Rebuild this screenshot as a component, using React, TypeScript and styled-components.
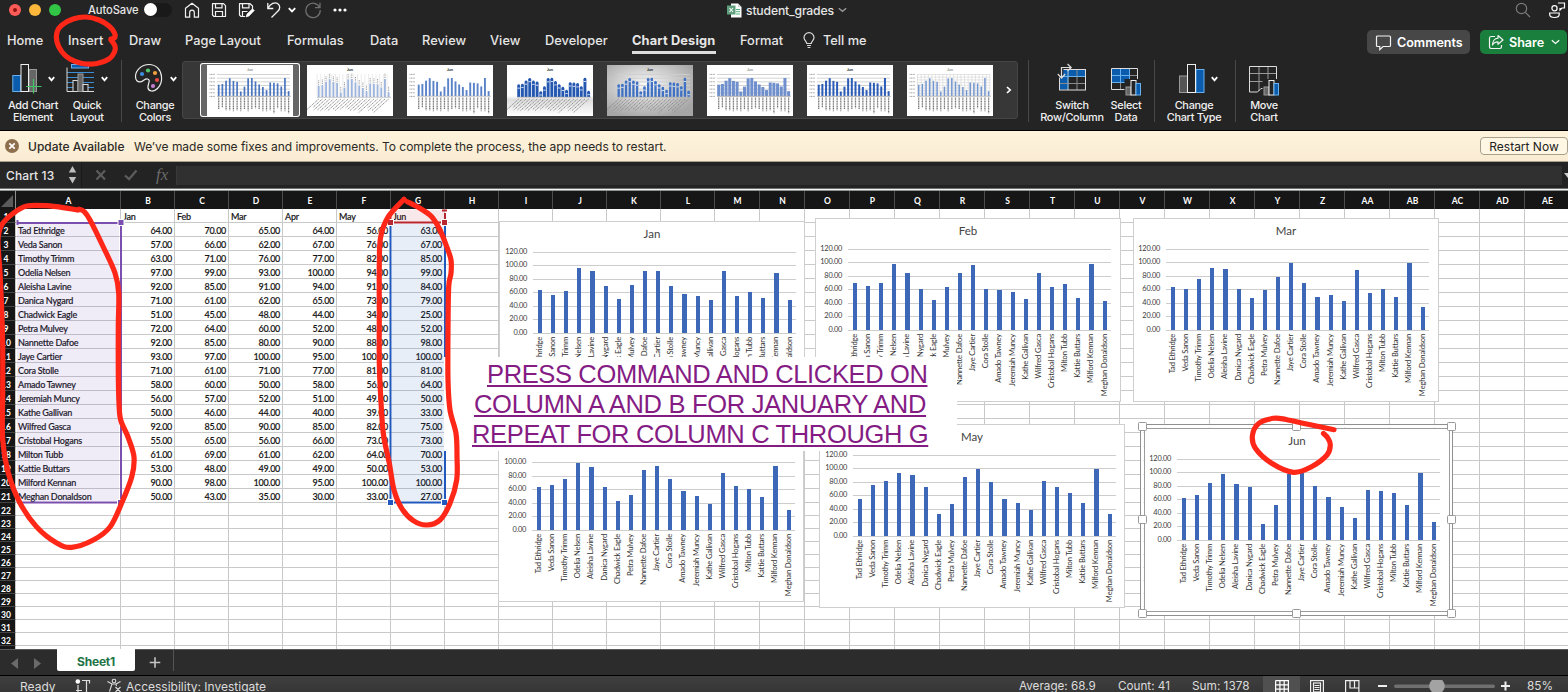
import React from "react";
import styled, { createGlobalStyle, css } from "styled-components";

const UI = `Inter, "Liberation Sans", sans-serif`;
const CELL = `Lato, "Liberation Sans", sans-serif`;

const Global = createGlobalStyle`
  * { box-sizing: border-box; }
  body { margin: 0; background: #242424; overflow: hidden; }
  svg { display: block; flex: none; }
`;

/* ---------- data ---------- */

const students: [string, number[]][] = [
  ["Tad Ethridge", [64, 70, 65, 64, 56, 63]],
  ["Veda Sanon", [57, 66, 62, 67, 76, 67]],
  ["Timothy Trimm", [63, 71, 76, 77, 82, 85]],
  ["Odelia Nelsen", [97, 99, 93, 100, 94, 99]],
  ["Aleisha Lavine", [92, 85, 91, 94, 91, 84]],
  ["Danica Nygard", [71, 61, 62, 65, 73, 79]],
  ["Chadwick Eagle", [51, 45, 48, 44, 34, 25]],
  ["Petra Mulvey", [72, 64, 60, 52, 48, 52]],
  ["Nannette Dafoe", [92, 85, 80, 90, 88, 98]],
  ["Jaye Cartier", [93, 97, 100, 95, 100, 100]],
  ["Cora Stolle", [71, 61, 71, 77, 81, 81]],
  ["Amado Tawney", [58, 60, 50, 58, 56, 64]],
  ["Jeremiah Muncy", [56, 57, 52, 51, 49, 50]],
  ["Kathe Gallivan", [50, 46, 44, 40, 39, 33]],
  ["Wilfred Gasca", [92, 85, 90, 85, 82, 75]],
  ["Cristobal Hogans", [55, 65, 56, 66, 73, 73]],
  ["Milton Tubb", [61, 69, 61, 62, 64, 70]],
  ["Kattie Buttars", [53, 48, 49, 49, 50, 53]],
  ["Milford Kennan", [90, 98, 100, 95, 100, 100]],
  ["Meghan Donaldson", [50, 43, 35, 30, 33, 27]],
];
const months = ["Jan", "Feb", "Mar", "Apr", "May", "Jun"];
const seriesOf = (m: number) => students.map((s) => s[1][m]);

const columns = Array.from({ length: 31 }, (_, i) => ({
  name: i < 26 ? String.fromCharCode(65 + i) : "A" + String.fromCharCode(65 + i - 26),
  width: i === 0 ? 105 : i < 12 ? 54 : 45,
}));
const rows = Array.from({ length: 33 }, (_, i) => i + 1);

/* ---------- window chrome ---------- */

const Window = styled.div`
  position: relative;
  width: 1568px;
  height: 692px;
  overflow: hidden;
  display: flex;
  flex-direction: column;
  background: #242424;
  color: #e6e6e6;
  font-family: ${UI};
`;

const TitleBar = styled.header`
  display: flex;
  align-items: center;
  height: 20px;
  padding-left: 9px;
`;
const Light = styled.span<{ $c: string; $dot?: boolean }>`
  display: flex;
  align-items: center;
  justify-content: center;
  width: 12px;
  height: 12px;
  margin-right: 8px;
  border-radius: 50%;
  background: ${(p) => p.$c};
  ${(p) => p.$dot && css`&::after { content: ""; width: 4px; height: 4px; border-radius: 50%; background: #8c1410; }`}
`;
const Label = styled.span<{ $w: number; $size?: number; $weight?: number; $ls?: number; $ml?: number }>`
  width: ${(p) => p.$w}px;
  margin-left: ${(p) => p.$ml ?? 0}px;
  flex: none;
  white-space: nowrap;
  font-size: ${(p) => p.$size ?? 12}px;
  font-weight: ${(p) => p.$weight ?? 500};
  letter-spacing: ${(p) => p.$ls ?? 0}px;
`;
const Toggle = styled.span`
  width: 28px;
  height: 14px;
  margin-left: 6px;
  border-radius: 7px;
  background: #191919;
  &::after { content: ""; display: block; width: 13px; height: 13px; border-radius: 50%; background: #fff; }
`;
const Slot = styled.span<{ $w: number; $ml?: number }>`
  display: flex;
  flex: none;
  justify-content: center;
  align-items: center;
  width: ${(p) => p.$w}px;
  margin-left: ${(p) => p.$ml ?? 0}px;
`;

const TabRow = styled.nav`
  display: flex;
  height: 40px;
  align-items: center;
  padding-left: 7px;
`;
const Tab = styled.span<{ $w: number; $gap: number; $active?: boolean }>`
  display: flex;
  flex: none;
  align-items: center;
  width: ${(p) => p.$w}px;
  height: 28px;
  margin-right: ${(p) => p.$gap}px;
  white-space: nowrap;
  font-size: 12.8px;
  font-weight: ${(p) => (p.$active ? 700 : 500)};
  letter-spacing: ${(p) => (p.$active ? 0.15 : 0.04)}px;
  border-bottom: 3px solid ${(p) => (p.$active ? "#dcdcdc" : "transparent")};
  border-top: 3px solid transparent;
`;
const PillButton = styled.button<{ $w: number; $bg: string; $ml: number }>`
  display: flex;
  flex: none;
  align-items: center;
  gap: 5px;
  width: ${(p) => p.$w}px;
  height: 24px;
  margin: 4px 0 0 ${(p) => p.$ml}px;
  padding: 0 0 0 8px;
  border: 0;
  border-radius: 5px;
  background: ${(p) => p.$bg};
  color: #fff;
  font: 600 12.6px ${UI};
  letter-spacing: -0.05px;
`;

const Ribbon = styled.section`
  display: flex;
  height: 71px;
  padding-left: 4px;
  border-bottom: 1px solid #000;
`;
const RibbonButton = styled.div<{ $w: number; $ml?: number }>`
  display: flex;
  flex: none;
  flex-direction: column;
  align-items: center;
  width: ${(p) => p.$w}px;
  margin-left: ${(p) => p.$ml ?? 0}px;
  padding-top: 3px;
  font-size: 10.9px;
  font-weight: 500;
  line-height: 12px;
  letter-spacing: -0.3px;
  text-align: center;
  white-space: pre;
  color: #f0f0f0;
`;
const IconRow = styled.div`
  display: flex;
  align-items: center;
  gap: 6px;
  height: 32px;
  margin-bottom: 4px;
`;
const Divider = styled.span<{ $ml: number }>`
  flex: none;
  width: 1px;
  height: 62px;
  margin-left: ${(p) => p.$ml}px;
  background: #484848;
`;
const Gallery = styled.div`
  display: flex;
  flex: none;
  align-items: center;
  width: 836px;
  height: 58px;
  margin: 1px 0 0 2px;
  padding-left: 17px;
  background: #373737;
  border: 1px solid #454545;
  border-radius: 3px;
`;
const ThumbFrame = styled.div<{ $on?: boolean }>`
  display: flex;
  flex: none;
  align-items: center;
  justify-content: center;
  width: 100px;
  height: 54px;
  border-radius: 3px;
  ${(p) => p.$on && css`background: #666; box-shadow: inset 0 0 0 1px #fff;`}
`;

const UpdateBar = styled.section`
  display: flex;
  align-items: center;
  height: 31px;
  padding-left: 5px;
  color: #2b2925;
  background: linear-gradient(#fff3dc, #f9ecd3);
  border-bottom: 1px solid #a89f8c;
`;
const RestartButton = styled.button`
  flex: none;
  width: 88px;
  height: 18px;
  padding: 0;
  border: 1px solid #a9a08c;
  border-radius: 4px;
  background: #fff6e3;
  color: #222;
  font: 400 12px ${UI};
  letter-spacing: 0;
`;

const FormulaBar = styled.section`
  display: flex;
  align-items: center;
  height: 26px;
  background: #232323;
`;
const NameBox = styled.div`
  display: flex;
  align-items: center;
  width: 82px;
  height: 26px;
  padding-left: 6px;
  background: #262626;
  border-right: 1px solid #191919;
`;
const FormulaInput = styled.div`
  width: 1386px;
  height: 19px;
  margin-left: 4px;
  background: #303030;
  border-left: 1px solid #3a3a3a;
`;
const Rule = styled.div`
  height: 3px;
  border-top: 1px solid #6f6f6f;
  border-bottom: 1px solid #8e9490;
  background: #f2f2f2;
`;

/* ---------- worksheet ---------- */

const Sheet = styled.main`
  position: relative;
  height: 458px;
  overflow: hidden;
  background: #fff;
  color: #151515;
  font-family: ${CELL};
`;
const HeaderRow = styled.div`
  display: flex;
  height: 18px;
  background: #161616;
`;
const ColumnHead = styled.span<{ $w: number }>`
  flex: none;
  width: ${(p) => p.$w}px;
  padding-left: 1px;
  border-right: 1px solid #4c4c4c;
  color: #fff;
  font-size: 8.5px;
  font-weight: 700;
  line-height: 20px;
  text-align: center;
`;
const Corner = styled.span`
  display: flex;
  justify-content: flex-end;
  align-items: flex-end;
  flex: none;
  width: 16px;
  padding: 0 2px 2px 0;
  border-right: 1px solid #8f8f8f;
`;
const Row = styled.div<{ $h: number }>`
  display: flex;
  height: ${(p) => p.$h}px;
`;
const RowHead = styled.span`
  flex: none;
  width: 16px;
  padding-right: 3px;
  background: #161616;
  border-right: 1px solid #c9c9c9;
  border-bottom: 1px solid #444;
  color: #fff;
  font-size: 8.5px;
  font-weight: 700;
  line-height: 16px;
  text-align: center;
`;
const Cell = styled.span<{ $w: number; $num?: boolean }>`
  flex: none;
  width: ${(p) => p.$w}px;
  padding: ${(p) => (p.$num ? "0 2px 0 0" : "0 0 0 2px")};
  border-right: 1px solid #c9c9c9;
  border-bottom: 1px solid #c9c9c9;
  font-size: 9px;
  font-weight: 500;
  line-height: 16px;
  letter-spacing: ${(p) => (p.$num ? -0.3 : -0.24)}px;
  text-align: ${(p) => (p.$num ? "right" : "left")};
  white-space: nowrap;
  -webkit-text-stroke: 0.15px #151515;
`;
const Overlay = styled.svg`
  position: absolute;
  left: 0;
  top: 0;
  pointer-events: none;
`;
const Placed = styled.svg<{ $x: number; $y: number }>`
  position: absolute;
  left: ${(p) => p.$x}px;
  top: ${(p) => p.$y}px;
  overflow: visible;
  font-family: ${CELL};
`;
const Note = styled.div`
  position: absolute;
  left: 444px;
  top: 166px;
  width: 513px;
  height: 94px;
  padding: 2px 0 0 0;
  background: #fff;
  color: #841c84;
  font-family: "Liberation Sans", Arial, sans-serif;
  font-size: 25.5px;
  line-height: 30px;
  white-space: nowrap;
`;
const NoteLine = styled.div<{ $ml: number; $ls: number }>`
  width: max-content;
  margin-left: ${(p) => p.$ml}px;
  letter-spacing: ${(p) => p.$ls}px;
  text-decoration: underline;
  text-decoration-thickness: 2px;
  text-underline-offset: 2px;
  text-decoration-skip-ink: none;
`;

/* ---------- footer ---------- */

const TabBar = styled.footer`
  display: flex;
  align-items: flex-start;
  height: 27px;
  background: #2c2c2c;
  border-top: 1px solid #5a5a5a;
  border-bottom: 1px solid #000;
`;
const SheetTab = styled.div`
  width: 78px;
  height: 22px;
  margin-top: -1px;
  margin-left: 13px;
  border-radius: 0 0 2px 2px;
  background: #fff;
  color: #217346;
  font-size: 12px;
  font-weight: 700;
  line-height: 25px;
  text-align: center;
  letter-spacing: -0.2px;
`;
const TabDivider = styled.span`
  width: 1px;
  height: 21px;
  margin-left: 12px;
  background: #555;
`;
const StatusBar = styled.footer`
  display: flex;
  align-items: flex-start;
  height: 16px;
  overflow: hidden;
  padding-left: 20px;
  color: #dcdcdc;
  line-height: 21px;
  background: linear-gradient(#3f3f3f, #363636);
`;
const ViewButton = styled.span<{ $w: number; $ml?: number; $on?: boolean }>`
  display: flex;
  flex: none;
  justify-content: center;
  width: ${(p) => p.$w}px;
  height: 22px;
  padding-top: 4px;
  margin-left: ${(p) => p.$ml ?? 0}px;
  background: ${(p) => (p.$on ? "#505050" : "transparent")};
`;

/* ---------- icons ---------- */

const Chevron = ({ w = 7, c = "#fff", sw = 1.8 }: { w?: number; c?: string; sw?: number }) => (
  <svg width={w} height="6" viewBox={`0 0 ${w} 6`} fill="none" stroke={c} strokeWidth={sw}>
    <path d={`M.8 1.2 L${w / 2} 4.4 L${w - 0.8} 1.2`} />
  </svg>
);
const line = { fill: "none", stroke: "#f2f2f2", strokeWidth: 1.2 } as const;

const HomeIcon = () => (
  <svg width="16" height="16" {...line}><path d="M1.500 15.200V6.300L8 1.300l6.500 5v8.900h-4.200v-4.700a2.300 2.300 0 0 0-4.600 0v4.700z" strokeLinejoin="round" /></svg>
);
const SaveIcon = ({ edit }: { edit?: boolean }) => (
  <svg width="17" height="16" {...line}>
    <path d={edit ? "M7 14.500H3L1.500 13V1.700H12L14.500 4v3" : "M1.500 1.700H12.500L14.500 3.700V14.500H3L1.500 13z"} strokeLinejoin="round" />
    <path d="M4.500 1.700v4.200h6.500V1.700" />
    <path d={edit ? "M4.500 14.500V9.500h5" : "M4.500 14.500V9.500h7v5"} />
    {edit && <path d="M8 15l1-3 5.500-5.300 1.800 1.800L11 14z" fill="#fff" stroke="#fff" strokeWidth=".6" />}
  </svg>
);
const UndoIcon = () => (
  <svg width="16" height="18" {...line}><path d="M1.800 2v5.500h5.500M2 7.200C4.500 2.500 9 .8 11.500 2.500c3 2 2.700 5.300.5 7.500L5.500 16.500" strokeWidth="1.300" /></svg>
);
const RedoIcon = () => (
  <svg width="18" height="18" {...line} stroke="#6f6f6f"><path d="M15.600 6.500A7.200 7.200 0 1 0 16.200 9M16 1.800v4.900h-5" strokeWidth="1.300" /></svg>
);
const FileIcon = () => (
  <svg width="15" height="15"><path d="M4 .5h7l3.500 3.500v10.500H4z" fill="#fff" /><path d="M11 .5V4h3.500" fill="#cfd8d3" /><path d="M9 6.500h4M9 8.700h4M9 11h4" stroke="#4fb37f" /><rect y="2.500" width="8.500" height="9" fill="#5f9f7d" /><path d="M2.500 5l3.500 4M6 5L2.500 9" stroke="#fff" strokeWidth="1.100" /></svg>
);
const BulbIcon = () => (
  <svg width="12" height="17" {...line} stroke="#d8d8d8"><path d="M3.800 11.500C3.800 9.500 1 8.500 1 5.600a5 5 0 0 1 10 0c0 2.900-2.800 3.900-2.800 5.900z M4 13.500h4M4.600 15.500h2.800" /></svg>
);
const SearchIcon = () => (
  <svg width="16" height="16" {...line} stroke="#7b7b7b"><circle cx="6.500" cy="6.500" r="5.200" /><path d="M10.300 10.300 15 15" /></svg>
);
const PeopleIcon = () => (
  <svg width="18" height="18" {...line} stroke="#fff"><circle cx="6.500" cy="7.300" r="2.600" /><path d="M1.700 12h9.500v1.500c0 4-9.500 4-9.500 0z" /><path d="M10 2h6.500v5H14l-2 2V7" /></svg>
);
const CommentIcon = () => (
  <svg width="17" height="17" {...line}><path d="M2.500 2h12a1 1 0 0 1 1 1v8.500a1 1 0 0 1-1 1H8L4.800 15.600V12.500H2.500a1 1 0 0 1-1-1V3a1 1 0 0 1 1-1z" /></svg>
);
const ShareIcon = () => (
  <svg width="16" height="16" {...line}><path d="M7 2.500H3.200A1.700 1.700 0 0 0 1.500 4.200v8.600a1.700 1.700 0 0 0 1.700 1.700h8.600a1.700 1.700 0 0 0 1.700-1.700V11" /><path d="M10 1.500 15 6l-5 4.300V7.800C7 7.800 5.500 9 4.500 11c0-3.500 2-6.500 5.500-6.800z" strokeLinejoin="round" /></svg>
);
const BLUE = "#0b5cad";
const SKY = "#69b1ee";
const AddChartIcon = () => (
  <svg width="30" height="32"><rect x=".8" y="12.500" width="8" height="16" fill={BLUE} stroke={SKY} /><rect x="17" y="6.500" width="7.500" height="22" fill="#666" stroke="#999" /><rect x="9" y="1.500" width="7.500" height="27" fill="#242424" stroke="#eee" /><path d="M21.500 16v14.500M14 23.500h15.500" stroke="#3fc468" strokeWidth="1.200" /></svg>
);
const QuickLayoutIcon = () => (
  <svg width="29" height="32"><rect x="5.500" y="1.500" width="17" height="3.500" fill={BLUE} stroke={SKY} /><path d="M1 9.500h27M1 14.500h27M1 19.500h27M1 24.500h27" stroke="#3b8fd6" strokeWidth="1.200" /><path d="M1 4.500v24h27" fill="none" stroke="#ddd" /><rect x="7" y="17.500" width="5" height="11" fill="#242424" stroke="#ddd" /><rect x="12" y="11" width="5" height="17.500" fill="#666" stroke="#999" /><rect x="17" y="21.500" width="5" height="7" fill="#242424" stroke="#ddd" /></svg>
);
const PaletteIcon = () => (
  <svg width="30" height="32"><path d="M15 1.500C7 1.500 1.500 8 1.500 13.500c0 4 2 5.500 5 5.300 3-.3 4-3.300 7-2.800 4 .8-.3 5.500.5 9 .7 3.300 5.500 4.500 9.500.5 3.500-3.500 4.500-7.500 4-12C26.800 6.500 22 1.500 15 1.500z" fill="none" stroke="#eee" strokeWidth="1.200" /><circle cx="8" cy="11" r="2.100" fill="#3b8fe0" /><circle cx="14" cy="7.500" r="2.100" fill="#54c66c" /><circle cx="21" cy="10" r="2.100" fill="#f0a040" /><circle cx="23" cy="17" r="2.100" fill="#e84848" /><circle cx="19" cy="23" r="2.100" fill="#c77fd4" /></svg>
);
const SwitchIcon = () => (
  <svg width="30" height="32"><rect x="2" y="6" width="27" height="21" fill="#242424" /><path d="M2.500 6.500h26v7H11v13H2.500z" fill={BLUE} /><path d="M11 6v21M20 6v21M2 13.500h27M2 20.500h27" stroke="#8a8a8a" /><path d="M2.500 13.500H28.500M11 6v21" stroke={SKY} /><rect x="2.500" y="6.500" width="26" height="20.500" fill="none" stroke="#ddd" /><path d="M0 0h11v5.500H6.500L6 12 3.500 15.500 0 12z" fill="#242424" /><path d="M4.500 15V4.500H14M10.500 1l3.700 3.500L10.500 8M.8 11l3.700 4 3.700-4" fill="none" stroke="#ddd" strokeWidth="1.200" /></svg>
);
const MiniBars = () => (
  <g><rect x="13.500" y="16" width="17" height="16" fill="#242424" /><rect x="15" y="24" width="5" height="8" fill="#666" stroke="#999" /><rect x="20" y="17.500" width="5" height="14.500" fill="#242424" stroke="#eee" /><rect x="25" y="20.500" width="4.500" height="11.500" fill={BLUE} stroke={SKY} /></g>
);
const SelectIcon = () => (
  <svg width="30" height="33"><path d="M.5 5.500h26v21H.5z" fill="#242424" /><path d="M.5 5.500h18v14H.5z" fill={BLUE} /><path d="M9.500 5.500v21M18.500 5.500v21M.5 12.500h26M.5 19.500h26" stroke="#8a8a8a" /><path d="M9.500 5.500v14M.5 12.500h18M.5 19.500h18M18.500 5.500v14" stroke={SKY} /><path d="M.5 5.500h26v21H.5z" fill="none" stroke="#ddd" /><MiniBars /></svg>
);
const MoveIcon = () => (
  <svg width="30" height="33"><path d="M10 3v25M19 3v25M.5 10.500h27M.5 18.500h27" stroke="#9a9a9a" /><path d="M.5 3.500h27v22H12l-3.500 3.500H.5z" fill="none" stroke="#ddd" /><MiniBars /></svg>
);
const ChartTypeIcon = () => (
  <svg width="26" height="32"><rect x=".5" y="13" width="8" height="16.500" fill="#555" stroke="#999" /><rect x="17" y="6.500" width="8" height="23" fill={BLUE} stroke={SKY} /><rect x="8.500" y="1.500" width="8" height="28" fill="#242424" stroke="#eee" /></svg>
);

/* ---------- charts ---------- */

const barX = (i: number) => 13 * i + (i >= 5 ? 1 : 0) + (i >= 12 ? 1 : 0) + (i >= 19 ? 1 : 0);
const barW = (i: number) => (i % 7 === 4 ? 5 : 4);
const gridY = [31, 44, 58, 71, 85, 98, 112];

function Chart({ x, y, month, inset, topCovered }: { x: number; y: number; month: number; inset: number; topCovered?: boolean }) {
  return (
    <Placed $x={x} $y={y} width="306" height="184">
      <rect x=".5" y=".5" width="305" height="183" fill="#fff" stroke="#cfcfcf" />
      {!topCovered && <text x="153" y="17" textAnchor="middle" fontSize="11.500" fill="#444">{months[month]}</text>}
      {gridY.map((gy, k) => (
        <g key={gy}>
          <rect x={inset} y={gy} width="263" height="1" fill="#cdcdcd" />
          {!(topCovered && k === 0) && (
            <text x={inset - 6} y={gy + 2.3} textAnchor="end" fontSize="7.400" letterSpacing="-0.25" fill="#3c3c3c">{(120 - k * 20).toFixed(2)}</text>
          )}
        </g>
      ))}
      {seriesOf(month).map((v, i) => {
        const top = Math.round(112.5 - v * 0.675);
        const cx = inset + 5 + barX(i) + 4;
        return (
          <g key={i}>
            <rect x={inset + 5 + barX(i)} y={top} width={barW(i)} height={112 - top} fill="#3d68b8" />
            <text transform={`translate(${cx} 116) rotate(-90)`} textAnchor="end" fontSize="7.600" letterSpacing="-0.18" fill="#333">{students[i][0]}</text>
          </g>
        );
      })}
    </Placed>
  );
}

const handles = [[-2, -2], [152, -2], [307, -2], [-2, 91], [307, 91], [-2, 185], [152, 185], [307, 185]];
const ChartSelection = ({ x, y }: { x: number; y: number }) => (
  <Placed $x={x} $y={y} width="306" height="184">
    <rect x="-2" y="-2" width="309.500" height="187.500" fill="none" stroke="#fff" strokeWidth="3" />
    <rect x="-3.500" y="-3.500" width="312" height="191" fill="none" stroke="#8f8f8f" />
    <rect x=".5" y=".5" width="305" height="183" fill="none" stroke="#9c9c9c" />
    {handles.map(([hx, hy]) => (
      <rect key={`${hx},${hy}`} x={hx - 3.5} y={hy - 3.5} width="8" height="8" rx="1" fill="#fff" stroke="#999" />
    ))}
  </Placed>
);

type ThumbStyle = { bar: string; w: number; slant?: boolean; grid?: "none" | "lines" | "hatch"; bg?: "white" | "fade" | "gray"; dots?: boolean; drop?: boolean; dark?: boolean };
const thumbs: ThumbStyle[] = [
  { bar: "#4a76c0", w: 1.7, grid: "lines" },
  { bar: "#9db4de", w: 1.8, grid: "none", slant: true, drop: true, dark: true },
  { bar: "#5a82c8", w: 1.9, grid: "none", dark: true },
  { bar: "#2457b0", w: 2.9, grid: "none", slant: true, dots: true, bg: "fade", dark: true },
  { bar: "#3f72c4", w: 2.3, grid: "lines", slant: true, dots: true, bg: "gray", dark: true },
  { bar: "#6f8fcd", w: 3, grid: "lines" },
  { bar: "#2b5cb8", w: 2, grid: "lines", dark: true },
  { bar: "#7296d0", w: 1.5, grid: "hatch" },
];
const june = seriesOf(5);
function Thumb({ t, id }: { t: ThumbStyle; id: number }) {
  const base = t.slant ? 32 : 31;
  return (
    <svg width="86" height="51">
      <defs>
        <linearGradient id={`fade${id}`} x1="0" y1="0" x2="0" y2="1"><stop offset="0" stopColor="#fff" /><stop offset=".6" stopColor="#fff" /><stop offset=".68" stopColor="#ddd" /><stop offset="1" stopColor="#fff" /></linearGradient>
        <radialGradient id={`gray${id}`} cx=".45" cy=".4" r=".65"><stop offset="0" stopColor="#fafafa" /><stop offset="1" stopColor="#a6a6a6" /></radialGradient>
      </defs>
      <rect width="86" height="51" fill={t.bg === "fade" ? `url(#fade${id})` : t.bg === "gray" ? `url(#gray${id})` : "#fff"} />
      <text x="43" y="5.800" textAnchor="middle" fontFamily={CELL} fontSize="4" fontWeight={t.dark ? 700 : 400} fill={t.dark ? "#222" : "#666"}>Jun</text>
      {t.grid === "lines" && [9, 12.7, 16.4, 20, 23.700, 27.400, 31].map((gy) => <rect key={gy} x="10" y={gy} width="73" height=".9" fill="#cfcfcf" />)}
      {t.grid === "hatch" && <g stroke="#d4d4d4" strokeWidth=".6">{Array.from({ length: 21 }, (_, i) => <path key={i} d={`M${10.5 + i * 3.62} 9v22`} />)}{Array.from({ length: 9 }, (_, i) => <path key={i} d={`M10 ${9.5 + i * 2.700}h73`} />)}</g>}
      {!t.slant && [9, 12.700, 16.400, 20, 23.700, 27.400, 31].map((gy) => <path key={gy} d={`M2.500 ${gy + 0.4}h5.500`} stroke="#999" strokeWidth="1" strokeDasharray="1 .6" />)}
      {june.map((v, i) => {
        const cx = 11.7 + i * 3.68;
        const h = v * 0.18;
        const len = students[i][0].length;
        return (
          <g key={i}>
            {t.drop && <path d={`M${cx - 1.6} 9v22`} stroke="#ddd" strokeWidth=".6" />}
            <rect x={cx - t.w / 2} y={base - h} width={t.w} height={h} fill={t.bar} />
            {t.dots && <path d={`M${cx - 1.2} ${base - h + 2.500}h2.400`} stroke="#dfe8f8" strokeWidth=".9" />}
            {t.dots && <circle cx={cx} cy={base - h} r="1.300" fill={t.bar} />}
            {t.drop && <path d={`M${cx} ${base - h - 1}v-5`} stroke="#999" strokeWidth="1" strokeDasharray="1 .7" />}
            {t.slant
              ? <path d={`M${cx} ${base + 2} l${-len * 0.95} ${len * 0.85}`} stroke="#888" strokeWidth="1" strokeDasharray="1.300 .7" />
              : <path d={`M${cx} ${base + 1.500}v${len * 0.98}`} stroke="#777" strokeWidth="1.300" strokeDasharray="1.200 .5" />}
          </g>
        );
      })}
      <rect x="10" y={base - 0.2} width="74" height=".7" fill="#aaa" />
    </svg>
  );
}

/* ---------- red marker strokes ---------- */

type Pt = [number, number];
const smooth = (p: Pt[]) =>
  p.slice(1).reduce((d, cur, k) => {
    const i = k + 1;
    const p0 = p[Math.max(i - 2, 0)], p1 = p[i - 1], p3 = p[Math.min(i + 1, p.length - 1)];
    return d + ` C${p1[0] + (cur[0] - p0[0]) / 6} ${p1[1] + (cur[1] - p0[1]) / 6} ${cur[0] - (p3[0] - p1[0]) / 6} ${cur[1] - (p3[1] - p1[1]) / 6} ${cur[0]} ${cur[1]}`;
  }, `M${p[0][0]} ${p[0][1]}`);
const strokes: Pt[][] = [
  [[111, 39], [114.5, 38], [114.500, 33], [109, 26], [99, 20], [86, 17], [73, 19], [62, 25], [57, 32], [57, 42], [62, 52], [70, 59], [82, 63.500], [97, 63.500], [109, 59], [114.500, 52], [115, 46], [111, 40]],
  [[77.7, 210], [68, 208.3], [46.7, 205.700], [26.7, 206], [13.3, 213.3], [1.7, 225], [-2, 240], [0, 273], [1.7, 310], [2.7, 347], [2.7, 393], [2.7, 440], [8.3, 473], [20, 503], [36.7, 527], [56.7, 543], [71.7, 547.3], [93.3, 540], [110, 527], [121.7, 503], [131.7, 477], [134, 457], [128, 437], [120.7, 420], [119, 403], [118.3, 373], [118.3, 327], [118.7, 293], [115, 273], [103.3, 247], [90, 220], [84, 211.500], [79, 209.3]],
  [[407.3, 201.7], [420, 208.3], [431.7, 216.7], [440, 230], [446.7, 246.7], [451, 260], [451, 273.3], [448.7, 286.7], [448, 330], [448, 380], [450, 410], [456, 433.3], [457, 456.7], [456.7, 480], [450, 503.3], [440, 520], [426.7, 525], [413.3, 520.7], [401.7, 508.3], [394, 490], [389.3, 463.3], [383.3, 433.3], [380.7, 396.7], [379.3, 363.3], [379.3, 313.3], [379.3, 263.3], [380.7, 236.7], [388.3, 216.7], [404, 199.3]],
  [[1334, 429.7], [1308, 424.3], [1286, 419.500], [1273.5, 418.3], [1259, 423.3], [1252.5, 435], [1255.4, 448.3], [1271.7, 463.3], [1293.4, 472.3], [1311.5, 466.7], [1327, 455], [1330.3, 445], [1327.8, 438], [1323.500, 433.500]],
];

const tabs: [string, number, number][] = [
  ["Home", 36, 25], ["Insert", 36, 25], ["Draw", 32, 24], ["Page Layout", 76, 26], ["Formulas", 57, 26], ["Data", 28, 24],
  ["Review", 44, 24], ["View", 30, 25], ["Developer", 63, 24], ["Chart Design", 84, 24], ["Format", 44, 19],
];

export default function App() {
  return (
    <>
      <Global />
      <Window>
        <TitleBar>
          <Light $c="#fc5b57" $dot />
          <Light $c="#fdb73b" />
          <Light $c="#32c546" />
          <Label $w={50} $ml={19} $size={11.2} $ls={-0.1}>AutoSave</Label>
          <Toggle />
          <Slot $w={16} $ml={12}><HomeIcon /></Slot>
          <Slot $w={17} $ml={11}><SaveIcon /></Slot>
          <Slot $w={17} $ml={10}><SaveIcon edit /></Slot>
          <Slot $w={16} $ml={11}><UndoIcon /></Slot>
          <Slot $w={8} $ml={6}><Chevron w={8} /></Slot>
          <Slot $w={18} $ml={8}><RedoIcon /></Slot>
          <Slot $w={14} $ml={11}>
            <svg width="14" height="4" fill="#fff"><circle cx="2" cy="2" r="1.600" /><circle cx="7" cy="2" r="1.600" /><circle cx="12" cy="2" r="1.600" /></svg>
          </Slot>
          <Slot $w={15} $ml={380}><FileIcon /></Slot>
          <Label $w={89} $ml={4} $size={12.2} $ls={-0.17}>student_grades</Label>
          <Slot $w={9} $ml={3}><Chevron w={9} c="#999" sw={1.4} /></Slot>
          <Slot $w={16} $ml={668}><SearchIcon /></Slot>
          <Slot $w={18} $ml={17}><PeopleIcon /></Slot>
        </TitleBar>

        <TabRow>
          {tabs.map(([name, w, gap]) => (
            <Tab key={name} $w={w} $gap={gap} $active={name === "Chart Design"}>{name}</Tab>
          ))}
          <BulbIcon />
          <Label $w={44} $ml={8} $size={12.8}>Tell me</Label>
          <PillButton $w={103} $bg="#474747" $ml={500}><CommentIcon />Comments</PillButton>
          <PillButton $w={87} $bg="#1a7f3c" $ml={10}><ShareIcon />Share<Slot $w={9} $ml={2}><Chevron w={9} sw={1.2} /></Slot></PillButton>
        </TabRow>

        <Ribbon>
          <RibbonButton $w={58}><IconRow><AddChartIcon /><Chevron /></IconRow>{"Add Chart\nElement"}</RibbonButton>
          <RibbonButton $w={50}><IconRow><QuickLayoutIcon /><Chevron /></IconRow>{"Quick\nLayout"}</RibbonButton>
          <Divider $ml={9} />
          <RibbonButton $w={50} $ml={8}><IconRow><PaletteIcon /><Chevron /></IconRow>{"Change\nColors"}</RibbonButton>
          <Gallery>
            {thumbs.map((t, i) => <ThumbFrame key={i} $on={i === 0}><Thumb t={t} id={i} /></ThumbFrame>)}
            <Slot $w={14} $ml={2}>
              <svg width="6" height="8" fill="none" stroke="#fff" strokeWidth="1.700"><path d="M1 1l3.200 3L1 7" /></svg>
            </Slot>
          </Gallery>
          <Divider $ml={10} />
          <RibbonButton $w={68} $ml={9}><IconRow><SwitchIcon /></IconRow>{"Switch\nRow/Column"}</RibbonButton>
          <RibbonButton $w={40}><IconRow><SelectIcon /></IconRow>{"Select\nData"}</RibbonButton>
          <Divider $ml={8} />
          <RibbonButton $w={58} $ml={10}><IconRow><Slot $w={2} /><ChartTypeIcon /><Chevron /></IconRow>{"Change\nChart Type"}</RibbonButton>
          <Divider $ml={12} />
          <RibbonButton $w={40} $ml={8}><IconRow><MoveIcon /></IconRow>{"Move\nChart"}</RibbonButton>
        </Ribbon>

        <UpdateBar>
          <svg width="14" height="14"><circle cx="7" cy="7" r="7" fill="#8d6f4d" /><path d="M4.300 4.300l5.400 5.400M9.700 4.300L4.300 9.700" stroke="#fff" strokeWidth="1.700" /></svg>
          <Label $w={97} $ml={9} $size={12}>Update Available</Label>
          <Label $w={1337} $ml={9} $size={12} $weight={400} $ls={-0.035}>We’ve made some fixes and improvements. To complete the process, the app needs to restart.</Label>
          <Slot $w={88} $ml={9}><RestartButton>Restart Now</RestartButton></Slot>
        </UpdateBar>

        <FormulaBar>
          <NameBox>
            <Label $w={56} $size={12} $ls={0.1}>Chart 13</Label>
            <svg width="20" height="20" fill="#bdbdbd"><path d="M10.500 1l3.700 6.500H6.800zM10.500 18.500l3.700-6.500H6.800z" /></svg>
          </NameBox>
          <Slot $w={12} $ml={13}><svg width="12" height="12" stroke="#5c5c5c" strokeWidth="2.200"><path d="M1.500 1.500l8.500 9M10 1.500l-8.500 9" /></svg></Slot>
          <Slot $w={14} $ml={17}><svg width="14" height="12" fill="none" stroke="#5c5c5c" strokeWidth="2.300"><path d="M1 6.500l4 3.700L12.500 1.500" /></svg></Slot>
          <Slot $w={18} $ml={16}>
            <svg width="18" height="20"><text x="2" y="15" fontFamily="Liberation Serif, serif" fontStyle="italic" fontSize="17" fill="#6a6a6a">fx</text></svg>
          </Slot>
          <FormulaInput />
          <Slot $w={6}><svg width="6" height="5"><path d="M2 0h4v5z" fill="#ccc" /></svg></Slot>
        </FormulaBar>
        <Rule />

        <Sheet>
          <HeaderRow>
            <Corner><svg width="12" height="12"><path d="M12 0v12H0z" fill="#5a5a5a" /></svg></Corner>
            {columns.map((c) => <ColumnHead key={c.name} $w={c.width}>{c.name}</ColumnHead>)}
          </HeaderRow>
          {rows.map((r) => (
            <Row key={r} $h={r <= 21 ? 14 : 13}>
              <RowHead>{r <= 32 ? r : ""}</RowHead>
              {columns.map((c, ci) => {
                const student = r >= 2 ? students[r - 2] : undefined;
                const num = !!student && ci >= 1 && ci <= 6;
                const text = r === 1 ? (ci >= 1 && ci <= 6 ? months[ci - 1] : "") : student ? (ci === 0 ? student[0] : num ? student[1][ci - 1].toFixed(2) : "") : "";
                return <Cell key={c.name} $w={c.width} $num={num}>{text}</Cell>;
              })}
            </Row>
          ))}

          <Overlay width="500" height="458" viewBox="0 191 500 458">
            <rect x="17" y="224" width="102" height="277" fill="#6b45b8" opacity=".11" />
            <path d="M18 223h101M121 225v275M17 502.500h101" stroke="#7a4fae" strokeWidth="2" />
            <path d="M17.500 220v5" stroke="#7a4fae" strokeWidth="2" />
            <rect x="392" y="224" width="52" height="277" fill="#2b65c0" opacity=".11" />
            <path d="M390.500 224v277M445 224v277M390 502.500h55" stroke="#2158bd" strokeWidth="2" fill="none" />
            <rect x="392" y="210" width="52" height="12" fill="#c9313b" opacity=".11" />
            <path d="M390 222.500h55M445 213v7M390.500 214v7" stroke="#b8272f" strokeWidth="2" />
            {([[121, 222.5, "#7a4fae"], [120.5, 502.5, "#7a4fae"], [390.500, 222.5, "#b8272f"], [444.5, 222.5, "#b8272f"], [390.500, 502.5, "#2158bd"], [444.5, 502.5, "#2158bd"]] as [number, number, string][]).map(([hx, hy, c]) => (
              <rect key={`${hx}-${hy}`} x={hx - 3} y={hy - 3} width="6" height="6" fill={c} stroke="#fff" />
            ))}
            <path d="M442 210.500h5" stroke="#b8272f" strokeWidth="2" />
          </Overlay>

          <Chart x={499} y={30} month={0} inset={34} />
          <Chart x={815} y={27} month={1} inset={33} />
          <Chart x={1133} y={27} month={2} inset={33} />
          <Chart x={498} y={227} month={3} inset={34} topCovered />
          <Chart x={819} y={233} month={4} inset={34} />
          <Chart x={1144} y={237} month={5} inset={33} />
          <ChartSelection x={1144} y={237} />

          <Note>
            <NoteLine $ml={43} $ls={-0.36}>PRESS COMMAND AND CLICKED ON</NoteLine>
            <NoteLine $ml={30} $ls={-0.3}>COLUMN A AND B FOR JANUARY AND</NoteLine>
            <NoteLine $ml={28} $ls={-0.34}>REPEAT FOR COLUMN C THROUGH G</NoteLine>
          </Note>
        </Sheet>

        <TabBar>
          <Slot $w={32} $ml={10}><svg width="32" height="26" fill="#6a6a6a"><path d="M8 8v11L1 13.500zM24 8v11l7-5.500z" /></svg></Slot>
          <Slot $w={2} />
          <SheetTab>Sheet1</SheetTab>
          <Slot $w={12} $ml={14}><svg width="12" height="25" stroke="#c4c4c4" strokeWidth="1.600"><path d="M.7 12.500h10.600M6 7.200v10.600" /></svg></Slot>
          <TabDivider />
        </TabBar>
        <StatusBar>
          <Label $w={35} $weight={400}>Ready</Label>
          <Slot $w={16} $ml={20}>
            <svg width="16" height="16" fill="none" stroke="#ddd" strokeWidth="1.200"><circle cx="2.800" cy="5.500" r="2.300" fill="#fff" stroke="none" /><path d="M7 4.500h7.500v3M11.500 4.500V16M3 9v7M1 14.500h6" /></svg>
          </Slot>
          <Slot $w={16} $ml={15}>
            <svg width="16" height="16" fill="none" stroke="#ddd" strokeWidth="1.100"><circle cx="8" cy="5" r="1.800" /><path d="M1.500 5.500l4.500 2.500-2.500 7.500M14.500 5.500L10 8l.5 2M6 8h4M9.500 11l5 5M14.500 11l-5 5" /></svg>
          </Slot>
          <Label $w={140} $ml={4} $weight={400}>Accessibility: Investigate</Label>
          <Label $w={78} $ml={753} $size={11.7} $weight={400}>Average: 68.9</Label>
          <Label $w={54} $ml={21} $size={11.7} $weight={400}>Count: 41</Label>
          <Label $w={60} $ml={20} $size={11.8} $weight={400}>Sum: 1378</Label>
          <ViewButton $w={37} $ml={11} $on><svg width="14" height="14" fill="none" stroke="#fff" strokeWidth="1.200"><path d="M.6.6h12.800V14M.6.6V14M4.900 0v14M9.200 0v14M0 4.900h14M0 9.200h14" /></svg></ViewButton>
          <ViewButton $w={34}><svg width="14" height="14" fill="none" stroke="#eee" strokeWidth="1.200"><rect x=".6" y=".6" width="12.800" height="14" /><rect x="3.500" y="3" width="7" height="9" /><path d="M4.500 5.500h5M4.500 7.500h5M4.500 9.500h5" /></svg></ViewButton>
          <ViewButton $w={36}><svg width="15" height="14" fill="none" stroke="#eee" strokeWidth="1.200"><path d="M.6 14V.6h13.300V14M5 .6V8h4.500V.6M9.500 8h4.500" /></svg></ViewButton>
          <ViewButton $w={9} $ml={8}><svg width="9" height="12"><rect y="5" width="9" height="2" fill="#eee" /></svg></ViewButton>
          <ViewButton $w={101} $ml={7}><svg width="101" height="18"><rect y="4.500" width="101" height="3.500" rx="1.700" fill="#707070" /><circle cx="43" cy="6" r="7.800" fill="#a3a3a3" /></svg></ViewButton>
          <ViewButton $w={9} $ml={6}><svg width="9" height="12" fill="#eee"><rect y="5" width="9" height="2" /><rect x="3.500" y="1.500" width="2" height="9" /></svg></ViewButton>
          <Label $w={28} $ml={17} $size={11.8} $weight={400}>85%</Label>
        </StatusBar>

        <Overlay width="1568" height="692" fill="none" stroke="#ff2718" strokeWidth="5.200" strokeLinecap="round" strokeLinejoin="round">
          {strokes.map((s, i) => <path key={i} d={smooth(s)} />)}
        </Overlay>
      </Window>
    </>
  );
}
